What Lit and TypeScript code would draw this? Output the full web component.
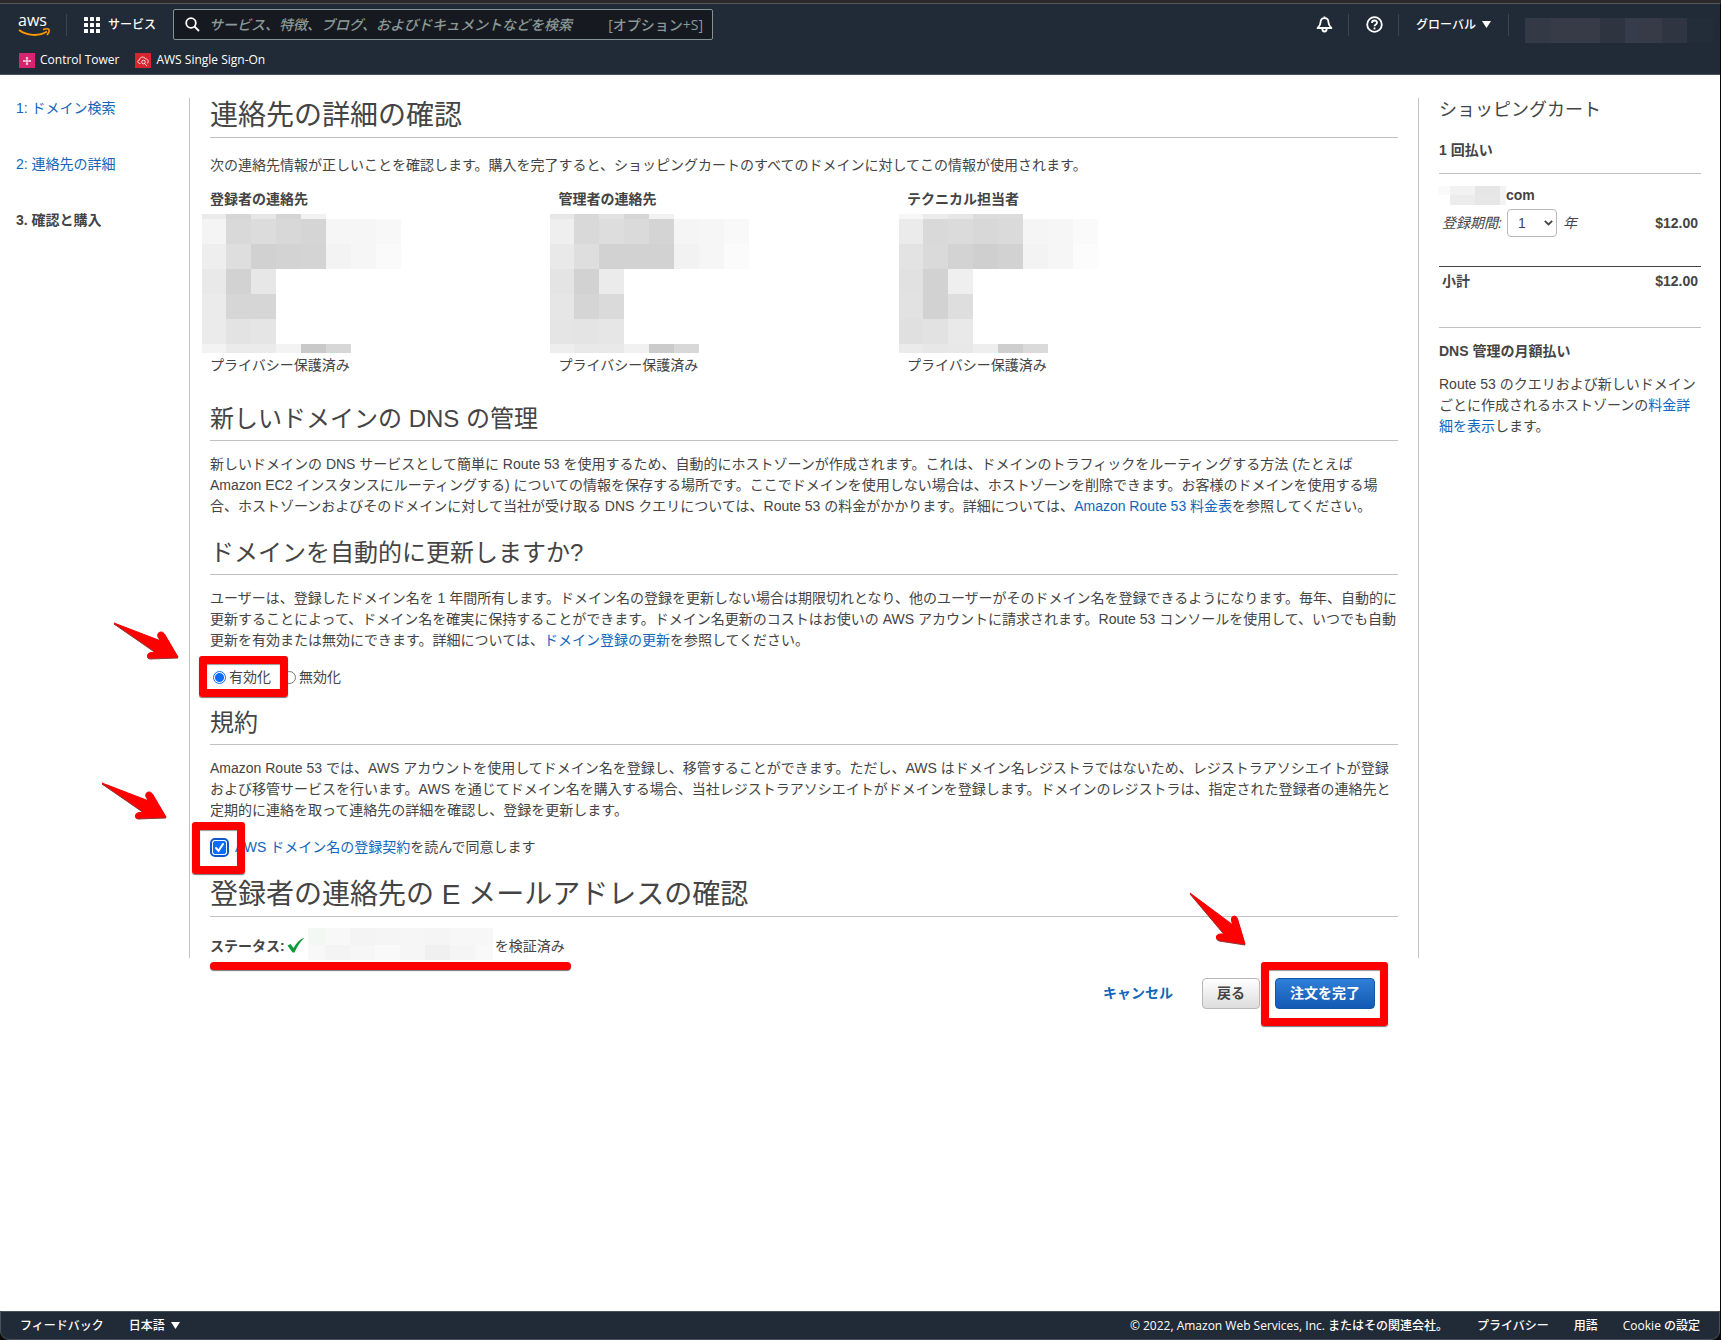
import { LitElement, html, css, svg, nothing } from "lit";
import { customElement, property, state } from "lit/decorators.js";

type Cell = [x: number, y: number, w: number, h: number, fill: string];

const grid = (
  xs: number[],
  ys: number[],
  rows: string[][],
): Cell[] =>
  rows.flatMap((row, r) =>
    row.map(
      (fill, c): Cell => [xs[c], ys[r], xs[c + 1] - xs[c], ys[r + 1] - ys[r], fill],
    ),
  );

const CONTACT_X = [0, 24, 49, 74, 99, 124, 149, 174, 199];
const CONTACT_Y = [0, 5, 30, 55, 80, 105, 130, 139];

const CONTACTS = [
  {
    title: "登録者の連絡先",
    rows: [
      ["#ebebeb", "#d6d6d6", "#e6e6e6", "#d5d5d5", "#f2f2f2"],
      ["#f4f4f4", "#d9d9d9", "#dcdcdc", "#d8d8d8", "#d5d5d5", "#f6f6f6", "#f6f6f6", "#f8f8f8"],
      ["#eeeeee", "#dedede", "#d1d1d1", "#d3d3d3", "#d4d4d4", "#f3f3f3", "#f6f6f6", "#fafafa"],
      ["#e9e9e9", "#d2d2d2", "#e7e7e7"],
      ["#ebebeb", "#d6d6d6", "#d6d6d6"],
      ["#ebebeb", "#e3e3e3", "#e5e5e5"],
      ["#f3f3f3", "#ebebeb", "#ebebeb", "#f3f3f3", "#c9c9c9", "#d7d7d7"],
    ],
  },
  {
    title: "管理者の連絡先",
    rows: [
      ["#e7e7e7", "#d8d8d8", "#e2e2e2", "#d6d6d6", "#f2f2f2"],
      ["#efefef", "#d9d9d9", "#dddddd", "#dadada", "#d4d4d4", "#f5f5f5", "#f6f6f6", "#f9f9f9"],
      ["#e9e9e9", "#dedede", "#d2d2d2", "#d2d2d2", "#d2d2d2", "#f2f2f2", "#f6f6f6", "#fbfbfb"],
      ["#e4e4e4", "#d2d2d2", "#ebebeb"],
      ["#e6e6e6", "#d5d5d5", "#dadada"],
      ["#e5e5e5", "#e4e4e4", "#e6e6e6"],
      ["#eeeeee", "#e9e9e9", "#e9e9e9", "#f1f1f1", "#cbcbcb", "#d8d8d8"],
    ],
  },
  {
    title: "テクニカル担当者",
    rows: [
      ["#f7f7f7", "#ececec", "#e6e6e6", "#dcdcdc", "#dcdcdc"],
      ["#ebebeb", "#d9d9d9", "#dbdbdb", "#d8d8d8", "#dadada", "#f5f5f5", "#f6f6f6", "#fafafa"],
      ["#e3e3e3", "#dadada", "#d3d3d3", "#cfcfcf", "#d2d2d2", "#f3f3f3", "#f6f6f6", "#fcfcfc"],
      ["#e1e1e1", "#d2d2d2", "#efefef"],
      ["#e2e2e2", "#d2d2d2", "#dedede"],
      ["#e0e0e0", "#e2e2e2", "#e9e9e9"],
      ["#ebebeb", "#e7e7e7", "#e8e8e8", "#eeeeee", "#cecece", "#dadada"],
    ],
  },
];

const EMAIL_CELLS = grid(
  [0, 17, 42, 67, 92, 117, 142, 167, 185],
  [0, 17, 32],
  [
    ["#f3f8f5", "#f8f8f8", "#f4f4f4", "#f5f5f5", "#f6f6f6", "#f5f5f5", "#f7f7f7", "#f7f7f7"],
    ["#f8f8f8", "#f4f4f4", "#f6f6f6", "#f9f9f9", "#f6f6f6", "#f0f0f0", "#f5f5f5", "#f9f9f9"],
  ],
);

const DOMAIN_CELLS = grid(
  [0, 12, 37, 62, 68],
  [0, 9, 19],
  [
    ["#fafafa", "#f2f2f2", "#e6e6e6", "#f3f3f3"],
    ["#ffffff", "#ececec", "#e7e7e7", "#f3f3f3"],
  ],
);

const ACCOUNT_CELLS = grid(
  [0, 25, 50, 75, 100, 113, 137, 162, 188],
  [0, 25],
  [["#333945", "#363b47", "#373b47", "#2e3440", "#373c4b", "#363b47", "#2f3541", "#232d39"]],
);

const baseStyles = css`
  *,
  *::before,
  *::after {
    box-sizing: border-box;
  }
  a {
    color: #1166bb;
    text-decoration: none;
  }
  a:hover {
    text-decoration: underline;
  }
  svg {
    display: block;
  }
`;

@customElement("pixel-mask")
export class PixelMask extends LitElement {
  @property({ attribute: false }) cells: Cell[] = [];
  static styles = css`
    :host {
      display: block;
    }
    svg {
      display: block;
    }
  `;
  render() {
    const w = Math.max(0, ...this.cells.map((c) => c[0] + c[2]));
    const h = Math.max(0, ...this.cells.map((c) => c[1] + c[3]));
    return html`<svg width=${w} height=${h} aria-hidden="true" shape-rendering="crispEdges">
      ${this.cells.map(
        ([x, y, cw, ch, fill]) =>
          svg`<rect x=${x} y=${y} width=${cw} height=${ch} fill=${fill}></rect>`,
      )}
    </svg>`;
  }
}

@customElement("arrow-mark")
export class ArrowMark extends LitElement {
  @property({ type: Boolean }) steep = false;
  static styles = css`
    :host {
      display: block;
      pointer-events: none;
    }
    svg {
      display: block;
      overflow: visible;
      filter: drop-shadow(0 1px 0 #8a3a3a);
    }
    path {
      fill: #fe0000;
      stroke: #fe0000;
      stroke-width: 1;
      stroke-linejoin: round;
    }
  `;
  render() {
    const d = this.steep
      ? "M0 0 L43 32 L41.500 26 Q41.500 23 44.500 23 Q47 23.500 47.500 26 L55 51 L29 47 Q26 46 26.500 43 Q27.500 41 30 41 L34.500 41 Z"
      : "M0 0 L47 18 L44 13 Q43 10 46 9 Q49 8.500 50.500 11 L64 34 L36 35 Q33 34.500 33.500 32 Q34 30 37 29.500 L42 29 Z";
    return html`<svg width=${this.steep ? 56 : 67} height=${this.steep ? 52 : 36} aria-hidden="true">
      <path d=${d}></path>
    </svg>`;
  }
}

@customElement("console-header")
export class ConsoleHeader extends LitElement {
  static styles = [
    baseStyles,
    css`
      :host {
        display: block;
        background: #212b37;
        color: #fff;
        border-top: 1px solid #58585a;
        border-bottom: 1px solid #48525c;
        font: 500 12px/18px "Open Sans", "Noto Sans CJK JP", sans-serif;
      }
      .bar {
        display: flex;
        align-items: center;
        height: 41px;
        padding: 0 7px 0 18px;
      }
      .logo {
        width: 32px;
        height: 24px;
        overflow: visible;
      }
      .logo text {
        font: 500 16px "Open Sans", sans-serif;
        fill: #fff;
      }
      .rule {
        width: 1px;
        height: 22px;
        background: #3b4550;
      }
      .logo + .rule {
        margin-left: 16px;
      }
      .services,
      .region,
      .icon {
        display: flex;
        align-items: center;
        padding: 0;
        border: 0;
        background: none;
        color: #fff;
        font: inherit;
      }
      .services {
        gap: 8px;
        margin: 0 17px;
      }
      .search {
        display: flex;
        align-items: center;
        flex: 0 1 540px;
        height: 31px;
        padding: 0 9px 0 11px;
        border: 1px solid #839496;
        border-radius: 2px;
        background: #16191f;
        color: #8a9a99;
        font-size: 14px;
      }
      .search label {
        flex: none;
      }
      .search input {
        flex: 1;
        min-width: 0;
        margin-left: 9px;
        padding: 0;
        border: 0;
        background: none;
        color: #fff;
        font: inherit;
        outline: 0;
      }
      .search input::placeholder {
        color: #8a9a99;
        font-style: italic;
        opacity: 1;
      }
      .tools {
        display: flex;
        align-items: center;
        margin-left: auto;
      }
      .icon {
        padding: 0 15px 0 17px;
      }
      .region {
        gap: 6px;
        padding: 0 17px;
      }
      .tools pixel-mask {
        margin: 12px 0 0 16px;
      }
      .favorites {
        display: flex;
        gap: 16px;
        height: 29px;
        padding: 6px 19px 0;
      }
      .favorites a {
        display: flex;
        align-items: center;
        gap: 5px;
        height: 18px;
        color: #fff;
        font-weight: 500;
      }
    `,
  ];
  render() {
    return html`
      <div class="bar">
        <svg class="logo" viewBox="0 0 32 24" role="img" aria-label="aws">
          <text x="0" y="13">aws</text>
          <path d="M1 17 C9 23 21 23.500 29 18.500" fill="none" stroke="#ff9900" stroke-width="2"></path>
          <path d="M25 16.500 C28 15.500 31 15.500 31 16.500 C31.500 18 30.500 20.500 29 22" fill="none" stroke="#ff9900" stroke-width="1.500"></path>
        </svg>
        <span class="rule"></span>
        <button class="services" type="button">
          <svg width="16" height="16" viewBox="0 0 16 16" fill="#fff" aria-hidden="true">
            ${[0, 6, 12].map((y) =>
              [0, 6, 12].map((x) => svg`<rect x=${x} y=${y} width="4" height="4" rx="0.500"></rect>`),
            )}
          </svg>
          <span>サービス</span>
        </button>
        <div class="search">
          <label for="query" aria-label="検索">
            <svg width="15" height="15" viewBox="0 0 15 15" fill="none" stroke="#fff" stroke-width="1.800" aria-hidden="true">
              <circle cx="6" cy="6" r="4.800"></circle>
              <path d="M9.500 9.500 L14 14"></path>
            </svg>
          </label>
          <input id="query" type="text" placeholder="サービス、特徴、ブログ、およびドキュメントなどを検索" />
          <span>[オプション+S]</span>
        </div>
        <div class="tools">
          <button class="icon" type="button" aria-label="通知">
            <svg width="17" height="17" viewBox="0 0 17 17" fill="none" stroke="#fff" stroke-width="1.800" stroke-linejoin="round" aria-hidden="true">
              <path d="M8.500 0.500 V2.500 M8.500 2.200 C5.700 2.200 4.600 4 4.600 6 C4.600 9 3.500 10 1.600 12 H15.400 C13.500 10 12.400 9 12.400 6 C12.400 4 11.300 2.200 8.500 2.200 Z"></path>
              <path d="M6.300 12.500 C6.300 16.500 10.700 16.500 10.700 12.500"></path>
            </svg>
          </button>
          <span class="rule"></span>
          <button class="icon" type="button" aria-label="ヘルプ">
            <svg width="17" height="17" viewBox="0 0 17 17" fill="none" stroke="#fff" stroke-width="1.800" aria-hidden="true">
              <circle cx="8.500" cy="8.500" r="7.300"></circle>
              <path d="M6 7 C6 3.600 11 3.800 11 6.700 C11 8.500 8.500 8.300 8.500 10.300"></path>
              <path d="M8.500 11.500 V13.400"></path>
            </svg>
          </button>
          <span class="rule"></span>
          <button class="region" type="button">
            <span>グローバル</span>
            <svg width="9" height="7" viewBox="0 0 9 7" fill="#fff" aria-hidden="true"><path d="M0 0 H9 L4.500 7 Z"></path></svg>
          </button>
          <span class="rule"></span>
          <pixel-mask .cells=${ACCOUNT_CELLS}></pixel-mask>
        </div>
      </div>
      <nav class="favorites">
        <a href="#">
          <svg width="16" height="15" viewBox="0 0 16 15" aria-hidden="true">
            <rect width="16" height="15" fill="#d6246e"></rect>
            <path d="M8 4 V12 M4 8 H12" stroke="#fff" stroke-width="1"></path>
            <path d="M6.800 5 H9.200 M6.800 11 H9.200 M5 7 V9 M11 7 V9" stroke="#fff" stroke-width="0.800"></path>
          </svg>
          <span>Control Tower</span>
        </a>
        <a href="#">
          <svg width="16" height="15" viewBox="0 0 16 15" fill="none" stroke="#fff" stroke-width="0.800" aria-hidden="true">
            <rect width="16" height="15" fill="#d9232e" stroke="none"></rect>
            <path d="M5.500 10.500 C2 10.500 2 7 4.500 7 C4.500 3.500 9.500 3 10.500 6 C13.500 5.500 14 9.500 12 10.500"></path>
            <circle cx="8.500" cy="9" r="1.800"></circle>
            <path d="M9.600 10.500 L12 13"></path>
          </svg>
          <span>AWS Single Sign-On</span>
        </a>
      </nav>
    `;
  }
}

@customElement("console-footer")
export class ConsoleFooter extends LitElement {
  static styles = [
    baseStyles,
    css`
      :host {
        display: flex;
        align-items: center;
        height: 29px;
        padding: 0 19px;
        border: 1px solid #48525c;
        border-radius: 0 0 9px 9px;
        background: #212b37;
        color: #fff;
        font: 500 12px/18px "Open Sans", "Noto Sans CJK JP", sans-serif;
      }
      a {
        color: #fff;
      }
      .language {
        display: flex;
        align-items: center;
        gap: 6px;
        margin-left: 25px;
        padding: 0;
        border: 0;
        background: none;
        color: #fff;
        font: inherit;
      }
      .legal {
        display: flex;
        gap: 25px;
        margin-left: auto;
      }
      .copyright {
        margin-right: 4px;
      }
    `,
  ];
  render() {
    return html`
      <a href="#">フィードバック</a>
      <button class="language" type="button">
        <span>日本語</span>
        <svg width="9" height="7" viewBox="0 0 9 7" fill="#fff" aria-hidden="true"><path d="M0 0 H9 L4.500 7 Z"></path></svg>
      </button>
      <div class="legal">
        <span class="copyright">© 2022, Amazon Web Services, Inc. またはその関連会社。</span>
        <a href="#">プライバシー</a>
        <a href="#">用語</a>
        <a href="#">Cookie の設定</a>
      </div>
    `;
  }
}

@customElement("shopping-cart")
export class ShoppingCart extends LitElement {
  static styles = [
    baseStyles,
    css`
      :host {
        display: block;
      }
      h2 {
        margin: 0;
        font-size: 18px;
        font-weight: 400;
        line-height: 24px;
      }
      h3 {
        margin: 0;
        font-size: 14px;
        line-height: 21px;
      }
      .once {
        margin-top: 18px;
        padding-bottom: 12px;
        border-bottom: 1px solid #c1c1c1;
      }
      .item {
        padding: 11px 3px 29px;
      }
      .domain {
        display: flex;
        height: 21px;
        align-items: center;
        margin-left: -4px;
        font-weight: 700;
      }
      .term {
        display: flex;
        align-items: center;
        height: 28px;
        margin-top: 3px;
        font-style: italic;
      }
      .select {
        position: relative;
        margin: 0 6px 0 5px;
      }
      select {
        display: block;
        width: 50px;
        height: 28px;
        padding: 0 0 0 10px;
        border: 1px solid #b8b8b8;
        border-radius: 4px;
        appearance: none;
        background: #fff;
        color: #444;
        font: 14px/20px "Liberation Sans", sans-serif;
      }
      .select svg {
        position: absolute;
        right: 4px;
        top: 11px;
        pointer-events: none;
      }
      .price {
        margin-left: auto;
        font-style: normal;
        font-weight: 700;
      }
      .subtotal {
        display: flex;
        justify-content: space-between;
        padding: 4px 3px 35px;
        border-top: 1px solid #444;
        border-bottom: 1px solid #c1c1c1;
        font-weight: 700;
      }
      .monthly {
        margin-top: 13px;
      }
      p {
        margin: 12px 0 0;
      }
    `,
  ];
  render() {
    return html`
      <h2>ショッピングカート</h2>
      <h3 class="once">1 回払い</h3>
      <div class="item">
        <div class="domain"><pixel-mask .cells=${DOMAIN_CELLS}></pixel-mask><span>com</span></div>
        <div class="term">
          <label for="years">登録期間:</label>
          <span class="select">
            <select id="years">
              ${[1, 2, 3, 4, 5, 6, 7, 8, 9, 10].map((n) => html`<option>${n}</option>`)}
            </select>
            <svg width="9" height="6" viewBox="0 0 9 6" fill="none" stroke="#444" stroke-width="1.800" aria-hidden="true"><path d="M0.800 0.800 L4.500 4.500 L8.200 0.800"></path></svg>
          </span>
          <span>年</span>
          <span class="price">$12.00</span>
        </div>
      </div>
      <div class="subtotal"><span>小計</span><span>$12.00</span></div>
      <h3 class="monthly">DNS 管理の月額払い</h3>
      <p>Route 53 のクエリおよび新しいドメインごとに作成されるホストゾーンの<a href="#">料金詳細を表示</a>します。</p>
    `;
  }
}

@customElement("app-root")
export class AppRoot extends LitElement {
  @state() private renew = true;
  @state() private agreed = true;

  static styles = [
    baseStyles,
    css`
      :host {
        display: flex;
        flex-direction: column;
        min-height: 100vh;
        box-sizing: border-box;
        padding: 3px 1px 0 0;
        background: linear-gradient(#2a2828 4px, #0a0808 4px);
        color: #444;
        font: 14px/21px "Liberation Sans", "Noto Sans CJK JP", sans-serif;
      }
      .page {
        flex: 1;
        display: grid;
        grid-template-columns: 189px minmax(0, 1fr) 301px;
        grid-template-rows: auto 1fr;
        padding-top: 23px;
        background: #fff;
      }
      .steps {
        display: flex;
        flex-direction: column;
        gap: 35px;
        padding-left: 16px;
      }
      .current {
        font-weight: 700;
      }
      main {
        padding: 0 20px 1px;
        border: 0 solid #c1c1c1;
        border-width: 0 1px;
      }
      shopping-cart {
        padding: 0 19px 0 20px;
      }
      h1,
      h2 {
        margin: 0;
        border-bottom: 1px solid #c1c1c1;
        font-weight: 400;
      }
      h1 {
        padding-bottom: 4px;
        font-size: 28px;
        line-height: 35px;
      }
      h2 {
        margin-top: 22px;
        padding-bottom: 7px;
        font-size: 24px;
        line-height: 28px;
      }
      p {
        margin: 13px 0 0;
      }
      .intro {
        margin-top: 17px;
      }
      .contacts {
        display: grid;
        grid-template-columns: repeat(3, minmax(0, 1fr));
        margin: 13px 0 29px;
        padding-right: 12%;
      }
      .contacts h3 {
        margin: 0;
        font-size: 14px;
      }
      .contacts pixel-mask {
        margin: 4px 0 2px -8px;
      }
      .options {
        position: relative;
        display: flex;
        gap: 12px;
        height: 20px;
        margin: 16px 0 0;
        padding: 0;
        border: 0;
      }
      .options label {
        display: flex;
        align-items: center;
        gap: 3px;
      }
      input[type="radio"] {
        appearance: none;
        width: 13px;
        height: 13px;
        margin: 0;
        border: 1px solid #767676;
        border-radius: 50%;
        background: #fff;
      }
      .options label:first-of-type {
        padding-left: 3px;
      }
      input[type="radio"]:checked {
        border-color: #0a6cff;
        background: radial-gradient(#0a6cff 4px, #fff 5px);
      }
      .agree {
        position: relative;
        display: flex;
        align-items: center;
        gap: 6px;
        height: 20px;
        margin-top: 16px;
      }
      .box {
        position: relative;
        display: block;
        padding: 3px;
      }
      input[type="checkbox"] {
        display: block;
        appearance: none;
        width: 13px;
        height: 13px;
        margin: 0;
        border: 1px solid #767676;
        border-radius: 2px;
        outline: 2px solid #1158c7;
        outline-offset: 1px;
      }
      input[type="checkbox"]:checked {
        border-color: #0a6cff;
        background: #0a6cff;
      }
      .box svg {
        position: absolute;
        left: 4px;
        top: 4px;
        pointer-events: none;
      }
      .email {
        margin-top: 20px;
      }
      .status {
        position: relative;
        display: flex;
        align-items: center;
        height: 21px;
        margin-top: 19px;
      }
      .status svg {
        margin: 0 3px 4px 2px;
      }
      .status pixel-mask {
        margin: -10px 2px -4px 0;
      }
      .actions {
        grid-column: 2;
        display: flex;
        align-items: flex-start;
        justify-content: flex-end;
        padding: 20px 44px 0 0;
      }
      .actions button {
        height: 31px;
        border-radius: 4px;
        font: 700 14px/21px "Liberation Sans", "Noto Sans CJK JP", sans-serif;
      }
      .cancel {
        margin-right: 29px;
        line-height: 31px;
        font-weight: 700;
      }
      .back {
        margin-right: 15px;
        padding: 0 14px;
        border: 1px solid #b8b8b8;
        background: linear-gradient(#fff, #ddd);
        color: #444;
      }
      .submit {
        position: relative;
        padding: 0 14px;
        border: 1px solid #1159a8;
        background: linear-gradient(#2f7fd8, #1459b3);
        color: #fff;
      }
      .frame {
        position: absolute;
        border: 8px solid #fe0000;
        border-radius: 3px;
        box-shadow:
          0 1px 1px #777,
          inset 0 1px 1px #999;
        pointer-events: none;
      }
      .options .frame {
        left: -11px;
        top: -11px;
        width: 89px;
        height: 41px;
      }
      .agree .frame {
        left: -18px;
        top: -15px;
        width: 53px;
        height: 52px;
      }
      .submit .frame {
        inset: -17px -14px -18px -15px;
      }
      .underline {
        position: absolute;
        left: 0;
        top: 26px;
        width: 361px;
        height: 8px;
        border-radius: 4px;
        background: #fe0000;
        box-shadow: 0 1px 1px #777;
      }
      arrow-mark {
        position: absolute;
      }
      .options arrow-mark {
        left: -96px;
        top: -44px;
      }
      .agree arrow-mark {
        left: -108px;
        top: -54px;
      }
      .submit arrow-mark {
        top: -86px;
        right: 128px;
      }
    `,
  ];

  render() {
    return html`
      <console-header></console-header>
      <div class="page">
        <nav class="steps">
          <a href="#">1: ドメイン検索</a>
          <a href="#">2: 連絡先の詳細</a>
          <span class="current">3. 確認と購入</span>
        </nav>
        <main>
          <h1>連絡先の詳細の確認</h1>
          <p class="intro">次の連絡先情報が正しいことを確認します。購入を完了すると、ショッピングカートのすべてのドメインに対してこの情報が使用されます。</p>
          <div class="contacts">
            ${CONTACTS.map(
              (c) => html`<section>
                <h3>${c.title}</h3>
                <pixel-mask .cells=${grid(CONTACT_X, CONTACT_Y, c.rows)}></pixel-mask>
                <div>プライバシー保護済み</div>
              </section>`,
            )}
          </div>
          <h2>新しいドメインの DNS の管理</h2>
          <p>新しいドメインの DNS サービスとして簡単に Route 53 を使用するため、自動的にホストゾーンが作成されます。これは、ドメインのトラフィックをルーティングする方法 (たとえば Amazon EC2 インスタンスにルーティングする) についての情報を保存する場所です。ここでドメインを使用しない場合は、ホストゾーンを削除できます。お客様のドメインを使用する場合、ホストゾーンおよびそのドメインに対して当社が受け取る DNS クエリについては、Route 53 の料金がかかります。詳細については、<a href="#">Amazon Route 53 料金表</a>を参照してください。</p>
          <h2>ドメインを自動的に更新しますか?</h2>
          <p>ユーザーは、登録したドメイン名を 1 年間所有します。ドメイン名の登録を更新しない場合は期限切れとなり、他のユーザーがそのドメイン名を登録できるようになります。毎年、自動的に更新することによって、ドメイン名を確実に保持することができます。ドメイン名更新のコストはお使いの AWS アカウントに請求されます。Route 53 コンソールを使用して、いつでも自動更新を有効または無効にできます。詳細については、<a href="#">ドメイン登録の更新</a>を参照してください。</p>
          <fieldset class="options" aria-label="自動更新">
            <label>
              <input type="radio" name="renew" .checked=${this.renew} @change=${() => (this.renew = true)} />有効化
            </label>
            <label>
              <input type="radio" name="renew" .checked=${!this.renew} @change=${() => (this.renew = false)} />無効化
            </label>
            <span class="frame"></span>
            <arrow-mark></arrow-mark>
          </fieldset>
          <h2>規約</h2>
          <p>Amazon Route 53 では、AWS アカウントを使用してドメイン名を登録し、移管することができます。ただし、AWS はドメイン名レジストラではないため、レジストラアソシエイトが登録および移管サービスを行います。AWS を通じてドメイン名を購入する場合、当社レジストラアソシエイトがドメインを登録します。ドメインのレジストラは、指定された登録者の連絡先と定期的に連絡を取って連絡先の詳細を確認し、登録を更新します。</p>
          <div class="agree">
            <span class="box">
              <input
                id="agree"
                type="checkbox"
                .checked=${this.agreed}
                @change=${(e: Event) => (this.agreed = (e.target as HTMLInputElement).checked)}
              />
              ${this.agreed
                ? html`<svg width="11" height="11" viewBox="0 0 11 11" fill="none" stroke="#fff" stroke-width="2" stroke-linecap="round" aria-hidden="true"><path d="M2 6 L4.500 8.800 L9 2"></path></svg>`
                : nothing}
            </span>
            <label for="agree"><a href="#">AWS ドメイン名の登録契約</a>を読んで同意します</label>
            <span class="frame"></span>
            <arrow-mark></arrow-mark>
          </div>
          <h1 class="email">登録者の連絡先の E メールアドレスの確認</h1>
          <div class="status">
            <b>ステータス:</b>
            <svg width="18" height="16" viewBox="0 0 18 16" fill="#0f9a3a" aria-hidden="true"><path d="M0.500 8.500 L3.500 7 L6.500 11 C9 6.500 12.500 2.500 17.500 0.500 C13.500 4.500 10 9.500 7.500 15.500 L5.500 15.500 Z"></path></svg>
            <pixel-mask .cells=${EMAIL_CELLS}></pixel-mask>
            <span>を検証済み</span>
            <span class="underline"></span>
          </div>
        </main>
        <shopping-cart></shopping-cart>
        <div class="actions">
          <a class="cancel" href="#">キャンセル</a>
          <button class="back" type="button">戻る</button>
          <button class="submit" type="button">
            注文を完了<span class="frame"></span><arrow-mark steep></arrow-mark>
          </button>
        </div>
      </div>
      <console-footer></console-footer>
    `;
  }
}
